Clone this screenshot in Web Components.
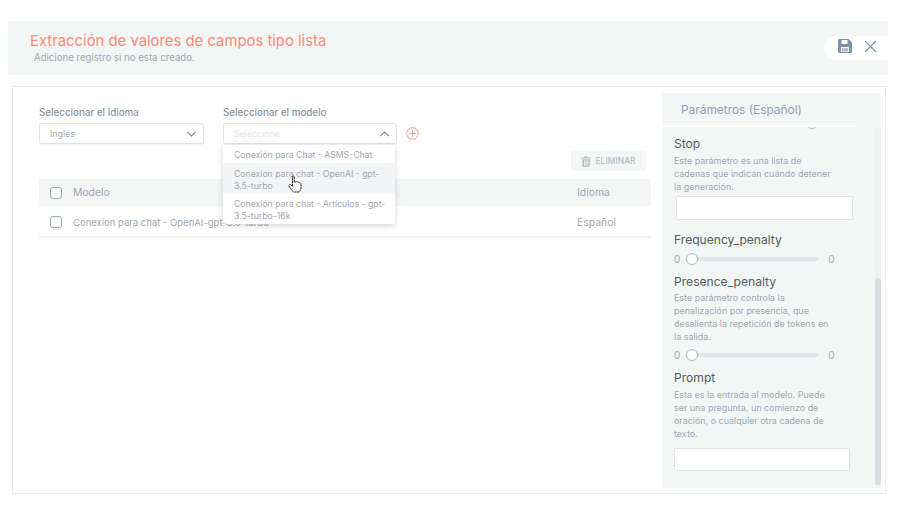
<!DOCTYPE html>
<html lang="es">
<head>
<meta charset="utf-8">
<title>Extracción de valores</title>
<style>
  html, body { margin: 0; background: #fff; height: 507px; overflow: hidden; }
  body { font-family: Inter, "Liberation Sans", sans-serif; color: #a0a8b5; }
</style>
</head>
<body>
<page-header title-text="Extracción de valores de campos tipo lista" subtitle="Adicione registro si no esta creado."></page-header>
<main-card>
  <model-form slot="main"></model-form>
  <model-table slot="main"></model-table>
  <param-panel slot="side" heading="Parámetros (Español)">
    <param-item name="Stop" text="Este parámetro es una lista de cadenas que indican cuándo detener la generación." kind="input" style="--p-top:2px;--input-left:2px;--input-top:3px;--gap:12px"></param-item>
    <param-item name="Frequency_penalty" kind="slider" style="--gap:8px"></param-item>
    <param-item name="Presence_penalty" text="Este parámetro controla la penalización por presencia, que desalienta la repetición de tokens en la salida." kind="slider" style="--slider-top:5px;--gap:8px"></param-item>
    <param-item name="Prompt" text="Esta es la entrada al modelo. Puede ser una pregunta, un comienzo de oración, o cualquier otra cadena de texto." kind="input" style="--p-top:2px;--input-top:8px;--input-w:176px;--input-h:23px"></param-item>
  </param-panel>
</main-card>
<script>
const FONT = 'Inter, "Liberation Sans", sans-serif';

class PageHeader extends HTMLElement {
  connectedCallback() {
    const root = this.attachShadow({ mode: 'open' });
    root.innerHTML = `
      <style>
        :host { display: flex; box-sizing: border-box; position: relative; margin: 21px 12px 0 8px; height: 54px; background: #f4f6f6; border-radius: 3px; padding: 10px 0 0 22px; font-family: ${FONT}; }
        h1 { margin: 0; font-size: 14.85px; line-height: 20px; font-weight: 400; color: #fa8a77; }
        p { margin: 0 0 0 4px; font-size: 9.65px; line-height: 13px; color: #a0a8b5; }
        .actions { position: absolute; right: 0; top: 15px; width: 64px; height: 24px; background: #fff; border-radius: 12px 0 0 12px; display: flex; align-items: center; gap: 12px; padding: 0 0 4px 14px; box-sizing: border-box; }
      </style>
      <div>
        <h1>${this.getAttribute('title-text')}</h1>
        <p>${this.getAttribute('subtitle')}</p>
      </div>
      <div class="actions">
        <svg width="14" height="14" viewBox="0 0 14 14"><path fill="#7d90a5" d="M1.5 0H10.5L14 3.5V12.5A1.5 1.5 0 0 1 12.5 14H1.5A1.5 1.5 0 0 1 0 12.5V1.5A1.5 1.5 0 0 1 1.5 0ZM3.5 1V5H9.5V1ZM3 8V13H11V8Z"/><path fill="#7d90a5" d="M4 9.5H10V10.5H4ZM4 11.2H10V12.2H4Z"/></svg>
        <svg width="13" height="13" viewBox="0 0 13 13"><path d="M1 1L12 12M12 1L1 12" stroke="#7d90a5" stroke-width="1.1" fill="none"/></svg>
      </div>`;
  }
}

class MainCard extends HTMLElement {
  constructor() {
    super();
    this.attachShadow({ mode: 'open' }).innerHTML = `
      <style>
        :host { display: flex; box-sizing: border-box; margin: 11px 14px 0 12px; height: 408px; border: 1px solid #e6eaf0; padding: 6px 4px 5px 26px; font-family: ${FONT}; }
        .main { width: 612px; flex: none; padding-top: 14px; }
        .side { margin-left: 11px; flex: 1; min-width: 0; }
      </style>
      <div class="main"><slot name="main"></slot></div>
      <div class="side"><slot name="side"></slot></div>`;
  }
}

class ModelForm extends HTMLElement {
  constructor() {
    super();
    const chevron = d => `<svg width="9" height="6" viewBox="0 0 11 7"><path d="${d}" stroke="#6f7f92" stroke-width="1.4" fill="none"/></svg>`;
    this.attachShadow({ mode: 'open' }).innerHTML = `
      <style>
        :host { display: block; position: relative; height: 44px; }
        .row { display: flex; align-items: flex-end; }
        label { display: block; font-size: 9.8px; font-weight: 500; line-height: 12px; color: #8b95a4; margin-bottom: 4px; }
        .box { box-sizing: border-box; height: 21px; border: 1px solid #dfe3e8; border-radius: 3px; box-shadow: 0 1px 1px rgba(0,0,0,.05); display: flex; align-items: center; justify-content: space-between; padding: 0 7px 0 10px; font-size: 8.8px; color: #a0a9b8; background: #fff; }
        .lang .box { width: 165px; }
        .model { margin-left: 19px; }
        .model .box { width: 174px; color: #dfe3ea; }
        .plus { margin: 0 0 4px 9px; }
        .menu { position: absolute; left: 184px; top: 38px; width: 172px; background: #fff; box-shadow: 0 2px 6px rgba(0,0,0,.16); border-radius: 0 0 3px 3px; font-size: 8.7px; line-height: 12px; color: #a0a8b5; z-index: 2; }
        .menu div { padding: 4px 6px 2px 11px; }
        .menu .hover { background: #f2f4f5; padding-top: 5px; padding-bottom: 1px; }
        .menu .last { padding-top: 5px; padding-bottom: 2px; }
        .hand { position: absolute; left: 249px; top: 68px; z-index: 3; }
      </style>
      <div class="row">
        <div class="lang"><label>Seleccionar el idioma</label><div class="box">Inglés ${chevron('M0.5 1L5.5 6L10.5 1')}</div></div>
        <div class="model"><label>Seleccionar el modelo</label><div class="box">Seleccione ${chevron('M0.5 6L5.5 1L10.5 6')}</div></div>
        <svg class="plus" width="13" height="13" viewBox="0 0 13 13"><circle cx="6.5" cy="6.5" r="5.8" stroke="#fa9a88" fill="none"/><path d="M6.5 3.2V9.8M3.2 6.5H9.8" stroke="#fa9a88" fill="none"/></svg>
      </div>
      <div class="menu">
        <div>Conexión para Chat - ASMS-Chat</div>
        <div class="hover">Conexion para chat - OpenAI - gpt-3.5-turbo</div>
        <div class="last">Conexión para chat - Artículos - gpt-3.5-turbo-16k</div>
      </div>
      <svg class="hand" width="14" height="18" viewBox="0 0 14 18"><path d="M4.5 1.6C4.5.6 6.2.6 6.2 1.6V7.2L7.8 7C8.2 6.2 9.4 6.4 9.6 7.2C10.2 6.8 11.2 7 11.4 7.8C12.2 7.6 13 8.2 13 9V13C13 15.4 11.8 17 10 17H6.5C5 17 4.4 16 3.4 14.6L1 11C.4 10 1.8 9 2.7 9.8L4.5 11.6Z" fill="#fff" stroke="#222" stroke-width="1" stroke-dasharray="2.2 .5"/></svg>`;
  }
}

class ModelTable extends HTMLElement {
  constructor() {
    super();
    const check = '<span class="check"></span>';
    this.attachShadow({ mode: 'open' }).innerHTML = `
      <style>
        :host { display: block; font-size: 10.4px; color: #a0a8b5; }
        .tools { display: flex; justify-content: flex-end; padding: 0 5px 8px 0; }
        .del { box-sizing: border-box; width: 75px; height: 20px; background: #f4f6f6; border-radius: 2px; display: flex; align-items: center; justify-content: center; gap: 4px; font-size: 8.4px; color: #aab2bd; letter-spacing: .1px; }
        .row { display: flex; align-items: center; padding-left: 11px; }
        .head { height: 27px; background: #f4f6f6; }
        .body { height: 32px; box-sizing: border-box; border-bottom: 2px solid #f0f2f4; padding-top: 2px; }
        .check { box-sizing: border-box; width: 12px; height: 12px; border: 1.2px solid #9aa5b5; border-radius: 3px; background: #fff; flex: none; margin-right: 11px; }
        .name { width: 504px; flex: none; white-space: nowrap; }
        .body .name { font-size: 9.5px; }
      </style>
      <div class="tools"><div class="del">
        <svg width="10" height="11" viewBox="0 0 10 11"><path fill="#b9c0c9" d="M0 1.5H3.2L3.7.3H6.3L6.8 1.5H10V2.5H0ZM1 3.2H9L8.5 11H1.5ZM3 4.5V9.8H3.8V4.5ZM4.6 4.5V9.8H5.4V4.5ZM6.2 4.5V9.8H7V4.5Z"/></svg>
        ELIMINAR</div></div>
      <div class="row head">${check}<span class="name">Modelo</span><span>Idioma</span></div>
      <div class="row body">${check}<span class="name">Conexion para chat - OpenAI-gpt-3.5-turbo</span><span>Español</span></div>`;
  }
}

class ParamPanel extends HTMLElement {
  connectedCallback() {
    const root = this.attachShadow({ mode: 'open' });
    root.innerHTML = `
      <style>
        :host { display: flex; flex-direction: column; height: 395px; background: #f4f6f6; border-radius: 2px; position: relative; overflow: hidden; }
        h2 { margin: 0; height: 32px; box-sizing: border-box; padding: 8px 0 0 19px; font-size: 11.9px; line-height: 18px; font-weight: 400; color: #8fa0b6; flex: none; }
        .cut { height: 2px; width: 195px; background: #fff; flex: none; }
        .body { padding: 9px 0 0 12px; flex: 1; }
        .track { position: absolute; right: 0; top: 34px; bottom: 0; width: 6px; background: #eff1f2; }
        .thumb { position: absolute; right: 0; width: 6px; top: 185px; height: 207px; background: #d9dde1; border-radius: 3px; }
        .clip { position: absolute; left: 144px; top: 34px; width: 12px; height: 2px; overflow: hidden; }
        .clip i { display: block; box-sizing: border-box; width: 12px; height: 12px; margin-top: -10px; border: 1px solid #a8b4c4; border-radius: 50%; }
      </style>
      <h2>${this.getAttribute('heading')}</h2>
      <div class="cut"></div>
      <div class="clip"><i></i></div>
      <div class="body"><slot></slot></div>
      <div class="track"></div><div class="thumb"></div>`;
  }
}

class ParamItem extends HTMLElement {
  connectedCallback() {
    const root = this.attachShadow({ mode: 'open' });
    const text = this.getAttribute('text');
    const control = this.getAttribute('kind') === 'slider'
      ? `<div class="slider"><span>0</span><div class="rail"><i></i></div><span>0</span></div>`
      : `<div class="field"></div>`;
    root.innerHTML = `
      <style>
        :host { display: block; margin-bottom: var(--gap, 0); }
        h3 { margin: 0; font-size: 12.1px; line-height: 16px; font-weight: 400; color: #555b63; }
        p { margin: var(--p-top, 1px) 0 0; width: 158px; font-size: 8.95px; line-height: 13px; color: #a0a8b5; }
        .field { box-sizing: border-box; width: var(--input-w, 177px); height: var(--input-h, 24px); margin: var(--input-top, 7px) 0 0 var(--input-left, 0); background: #fff; border: 1px solid #dfe3e8; border-radius: 2px; }
        .slider { display: flex; align-items: center; height: 14px; margin-top: var(--slider-top, 4px); font-size: 10px; color: #a0a8b5; }
        .rail { position: relative; width: 133px; height: 4px; background: #e3e7ea; border-radius: 2px; margin: 0 9px 0 6px; }
        .rail i { position: absolute; left: 0; top: -4px; box-sizing: border-box; width: 12px; height: 12px; background: #fff; border: 1px solid #a8b4c4; border-radius: 50%; }
      </style>
      <h3>${this.getAttribute('name')}</h3>
      ${text ? `<p>${text}</p>` : ''}
      ${control}`;
  }
}

customElements.define('page-header', PageHeader);
customElements.define('main-card', MainCard);
customElements.define('model-form', ModelForm);
customElements.define('model-table', ModelTable);
customElements.define('param-panel', ParamPanel);
customElements.define('param-item', ParamItem);
</script>
</body>
</html>
